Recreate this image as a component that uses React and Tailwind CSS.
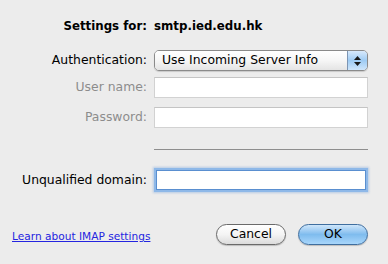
export default function App() {
  return (
    <div
      className="w-[388px] h-[264px] bg-[#ececec] text-[12.4px] text-black overflow-hidden flex flex-col"
      style={{ fontFamily: '"DejaVu Sans", "Lucida Grande", sans-serif' }}
    >
      <div className="mt-[18px] h-[18px] flex items-center">
        <div className="w-[147px] text-right font-bold text-[11.8px]">Settings for:</div>
        <div className="ml-[7px] font-bold text-[11.8px]">smtp.ied.edu.hk</div>
      </div>

      <div className="mt-[14px] h-[21px] flex items-center">
        <div className="w-[147px] text-right">Authentication:</div>
        <div className="ml-[7px] w-[214px] h-[21px] flex rounded-[5px] border border-[#8a8a8a] overflow-hidden shadow-[0_1px_1px_rgba(0,0,0,0.15)]">
          <div className="flex-1 flex items-center pl-[7px] bg-gradient-to-b from-white via-[#f6f6f6] to-[#e4e4e4]">
            Use Incoming Server Info
          </div>
          <div className="w-[20px] border-l border-[#7d95b3] bg-gradient-to-b from-[#d8e9fb] via-[#9ecbf3] to-[#cfe6fb] flex flex-col items-center justify-center gap-[2px]">
            <svg width="7" height="4" viewBox="0 0 7 4">
              <path d="M3.5 0 L7 4 L0 4 Z" fill="#1a1a1a" />
            </svg>
            <svg width="7" height="4" viewBox="0 0 7 4">
              <path d="M0 0 L7 0 L3.5 4 Z" fill="#1a1a1a" />
            </svg>
          </div>
        </div>
      </div>

      <div className="mt-[6px] h-[21px] flex items-center">
        <div className="w-[147px] text-right text-[#8c8c8c]">User name:</div>
        <div className="ml-[7px] w-[214px] h-[21px] bg-white border border-[#d2d2d2] border-t-[#c4c4c4]" />
      </div>

      <div className="mt-[9px] h-[21px] flex items-center">
        <div className="w-[147px] text-right text-[#8c8c8c]">Password:</div>
        <div className="ml-[7px] w-[214px] h-[21px] bg-white border border-[#d2d2d2] border-t-[#c4c4c4]" />
      </div>

      <div className="mt-[21px] h-[1px] flex">
        <div className="ml-[154px] w-[214px] h-[1px] bg-[#8e8e8e]" />
      </div>

      <div className="mt-[18px] h-[24px] flex items-center">
        <div className="w-[147px] text-right">Unqualified domain:</div>
        <div className="ml-[9px] w-[210px] h-[20px] bg-white border border-[#5a8fd0] shadow-[0_0_0_2px_#8eb8e8,0_0_2px_3px_rgba(120,165,220,0.45)]" />
      </div>

      <div className="mt-[32px] h-[21px] flex items-center">
        <a
          href="#"
          className="ml-[12px] w-[140px] text-[10.6px] text-[#2424e0] underline whitespace-nowrap self-end"
        >
          Learn about IMAP settings
        </a>
        <button className="ml-[64px] w-[70px] h-[21px] rounded-full border border-[#6a6a6a] bg-gradient-to-b from-white via-[#f4f4f4] to-[#dcdcdc] text-[12.4px] flex items-center justify-center shadow-[0_1px_1px_rgba(0,0,0,0.2)]">
          Cancel
        </button>
        <button className="ml-[12px] w-[70px] h-[21px] rounded-full border border-[#3f6e9f] bg-gradient-to-b from-[#cfe6fa] via-[#7fbcee] to-[#a8d6fb] text-[12.4px] flex items-center justify-center shadow-[0_1px_1px_rgba(0,0,0,0.2)]">
          OK
        </button>
      </div>
    </div>
  );
}
